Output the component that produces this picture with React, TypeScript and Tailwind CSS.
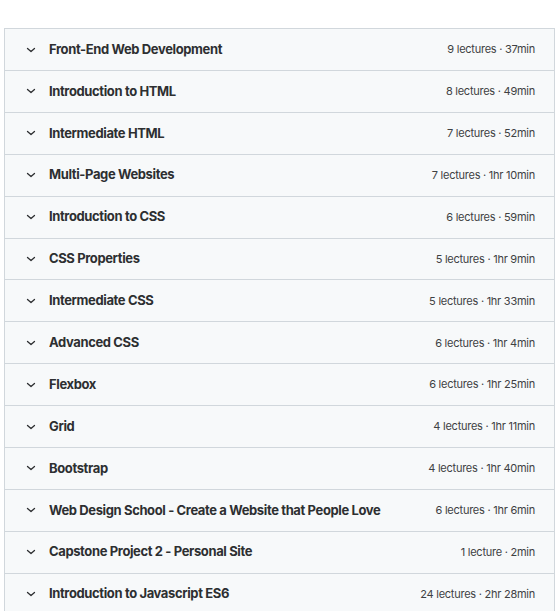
const sections = [
  { title: 'Front-End Web Development', meta: '9 lectures · 37min' },
  { title: 'Introduction to HTML', meta: '8 lectures · 49min' },
  { title: 'Intermediate HTML', meta: '7 lectures · 52min' },
  { title: 'Multi-Page Websites', meta: '7 lectures · 1hr 10min' },
  { title: 'Introduction to CSS', meta: '6 lectures · 59min' },
  { title: 'CSS Properties', meta: '5 lectures · 1hr 9min' },
  { title: 'Intermediate CSS', meta: '5 lectures · 1hr 33min' },
  { title: 'Advanced CSS', meta: '6 lectures · 1hr 4min' },
  { title: 'Flexbox', meta: '6 lectures · 1hr 25min' },
  { title: 'Grid', meta: '4 lectures · 1hr 11min' },
  { title: 'Bootstrap', meta: '4 lectures · 1hr 40min' },
  { title: 'Web Design School - Create a Website that People Love', meta: '6 lectures · 1hr 6min' },
  { title: 'Capstone Project 2 - Personal Site', meta: '1 lecture · 2min' },
  { title: 'Introduction to Javascript ES6', meta: '24 lectures · 2hr 28min' },
]

function Chevron() {
  return (
    <svg width="10" height="10" viewBox="0 0 10 10" fill="none" className="shrink-0">
      <path d="M1.5 3.5 L5 6.5 L8.5 3.5" stroke="#2d2f31" strokeWidth="1.3" strokeLinecap="round" strokeLinejoin="round" />
    </svg>
  )
}

export default function App() {
  return (
    <div className="min-h-screen bg-white pt-[28px] pl-[4px] pr-[3px]" style={{ fontFamily: 'Inter, "Liberation Sans", sans-serif' }}>
      <div className="border border-[#d1d7dc] bg-[#f7f9fa]">
        {sections.map((s, i) => (
          <div
            key={s.title}
            className={`flex items-center pl-[21px] pr-[19px] ${i > 0 ? 'h-[41.9px] border-t border-[#d1d7dc]' : 'h-[41px]'}`}
          >
            <Chevron />
            <span className="ml-[13px] flex-1 truncate text-[13px] font-bold tracking-[-0.38px] text-[#2d2f31]">{s.title}</span>
            <span className="text-[11px] tracking-[-0.25px] text-[#3e4143]">{s.meta}</span>
          </div>
        ))}
      </div>
    </div>
  )
}
